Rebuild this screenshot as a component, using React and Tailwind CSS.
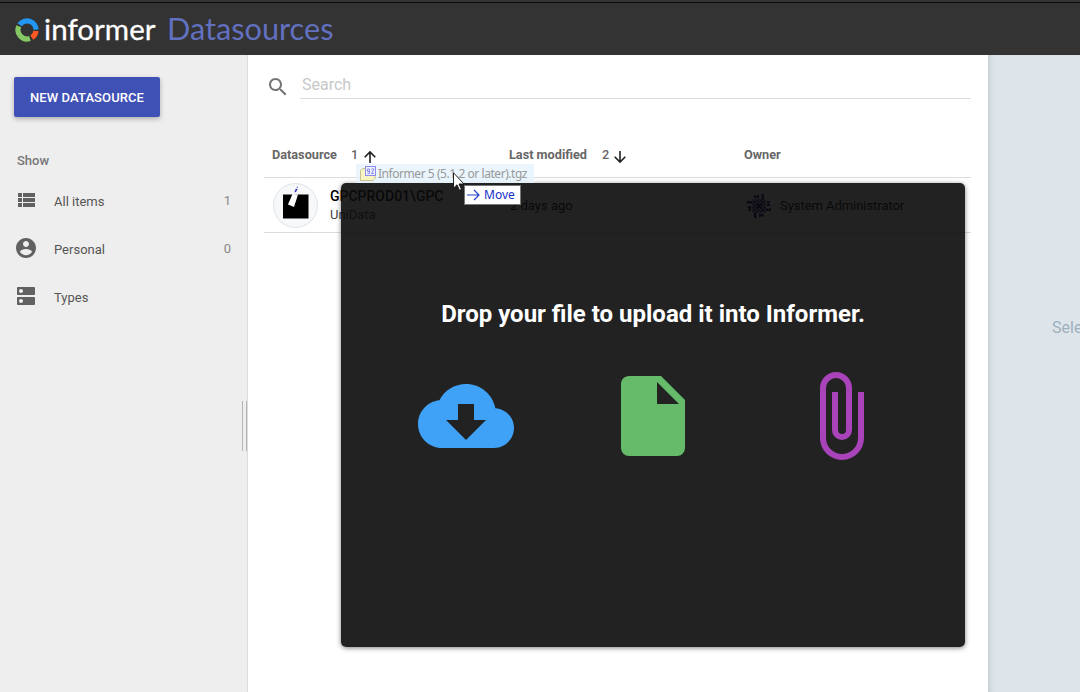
const FILE_ICON = "M13,9V3.5L18.5,9M6,2C4.89,2 4,2.89 4,4V20A2,2 0 0,0 6,22H18A2,2 0 0,0 20,20V8L14,2H6Z";
const CLOUD_ICON = "M19.35 10.04C18.67 6.59 15.64 4 12 4 9.11 4 6.6 5.64 5.35 8.04 2.34 8.36 0 10.91 0 14c0 3.31 2.69 6 6 6h13c2.76 0 5-2.24 5-5 0-2.64-2.05-4.78-4.65-4.96zM17 13l-5 5-5-5h3V9h4v4h3z";
const CLIP_ICON = "M16.5,6V17.5A4,4 0 0,1 12.5,21.5A4,4 0 0,1 8.5,17.5V5A2.5,2.5 0 0,1 11,2.5A2.5,2.5 0 0,1 13.5,5V15.5A1,1 0 0,1 12.5,16.5A1,1 0 0,1 11.5,15.5V6H10V15.5A2.5,2.5 0 0,0 12.5,18A2.5,2.5 0 0,0 15,15.5V5A4,4 0 0,0 11,1A4,4 0 0,0 7,5V17.5A5.5,5.5 0 0,0 12.5,23A5.5,5.5 0 0,0 18,17.5V6H16.5Z";
const LIST_ICON = "M4 14h4v-4H4v4zm0 5h4v-4H4v4zM4 9h4V5H4v4zm5 5h12v-4H9v4zm0 5h12v-4H9v4zM9 5v4h12V5H9z";
const PERSON_ICON = "M12 2C6.48 2 2 6.48 2 12s4.48 10 10 10 10-4.48 10-10S17.52 2 12 2zm0 3c1.66 0 3 1.34 3 3s-1.34 3-3 3-3-1.34-3-3 1.34-3 3-3zm0 14.2c-2.5 0-4.71-1.28-6-3.22.03-1.99 4-3.08 6-3.08 1.99 0 5.97 1.09 6 3.08-1.29 1.94-3.5 3.22-6 3.22z";
const DNS_ICON = "M20 13H4c-.55 0-1 .45-1 1v6c0 .55.45 1 1 1h16c.55 0 1-.45 1-1v-6c0-.55-.45-1-1-1zM7 19c-1.1 0-2-.9-2-2s.9-2 2-2 2 .9 2 2-.9 2-2 2zM20 3H4c-.55 0-1 .45-1 1v6c0 .55.45 1 1 1h16c.55 0 1-.45 1-1V4c0-.55-.45-1-1-1zM7 9c-1.1 0-2-.9-2-2s.9-2 2-2 2 .9 2 2-.9 2-2 2z";
const SEARCH_ICON = "M15.5 14h-.79l-.28-.27C15.41 12.59 16 11.11 16 9.5 16 5.91 13.09 3 9.5 3S3 5.91 3 9.5 5.91 16 9.5 16c1.61 0 3.09-.59 4.23-1.57l.27.28v.79l5 4.99L20.49 19l-4.99-5zm-6 0C7.01 14 5 11.99 5 9.5S7.01 5 9.5 5 14 7.01 14 9.5 11.99 14 9.5 14z";

function Icon({ d, className }) {
  return (
    <svg viewBox="0 0 24 24" fill="currentColor" className={className}>
      <path d={d} />
    </svg>
  );
}

function Logo() {
  return (
    <svg viewBox="0 0 24 24" className="mt-[2px] h-6 w-6 shrink-0" fill="none" strokeWidth="5.2">
      <path d="M4.600 6.800A9 9 0 0 1 21 11.600" stroke="#2196f3" />
      <path d="M20.960 12.900A9 9 0 0 1 16.800 19.600" stroke="#ff5722" />
      <path d="M14.900 20.500A9 9 0 0 1 3.800 8.300" stroke="#84c764" />
    </svg>
  );
}

function SortArrow({ down }) {
  return (
    <svg viewBox="0 0 14 14" className={down ? "ml-1 mt-[5px] h-3.5 w-3.5 rotate-180" : "ml-[5px] mt-[5px] h-3.5 w-3.5"} fill="none" stroke="#212121" strokeWidth="1.6">
      <path d="M7 13V2M1.700 7.200L7 1.900l5.300 5.300" />
    </svg>
  );
}

function NavItem({ icon, label, count }) {
  return (
    <div className="flex h-12 items-center pl-[14px] pr-4 text-[13px] text-[#555]">
      <Icon d={icon} className="mt-[-2px] h-6 w-6 text-[#616161]" />
      <span className="ml-4 mt-[2px] flex-1">{label}</span>
      <span className="text-[#888]">{count}</span>
    </div>
  );
}

function OwnerAvatar() {
  return (
    <svg viewBox="0 0 26 26" className="h-[26px] w-[26px]" fill="#12127c">
      <path d="M8 2l1.500 1L13 1.500v4L9.500 4.500 8 5.500zM15 1h3v5h-3l1-2.500zM24 8l-1 1.500 1.500 3.500h-4l1-3.500L20.500 8zM25 15v3h-5v-3l2.500 1zM18 24l-1.500-1-3.500 1.500v-4l3.500 1 1.500-1zM11 25H8v-5h3l-1 2.500zM2 18l1-1.500L1.500 13h4l-1 3.500 1 1.500zM1 11V8h5v3l-2.500-1z" />
      <rect x="6.500" y="6.500" width="13" height="13" />
      <path d="M9 7l2 2-2 2-2-2zM17 7l2 2-2 2-2-2zM9 15l2 2-2 2-2-2zM17 15l2 2-2 2-2-2zM13 7l1.500 2-1.500 2-1.500-2zM13 15l1.500 2-1.500 2-1.500-2zM9 11.500l2 1.500-2 1.500L7 13zM17 11.500l2 1.500-2 1.500-2-1.500z" fill="none" stroke="#fff" strokeWidth=".7" />
    </svg>
  );
}

export default function App() {
  return (
    <div className="relative flex h-[692px] w-[1080px] flex-col overflow-hidden bg-white font-['Roboto',sans-serif]">
      <header className="flex h-[55px] shrink-0 flex-col bg-[#333]">
        <div className="mt-0.5 h-px bg-[#0c0c0c]" />
        <div className="flex h-[52px] items-center pl-[15px] font-['Lato',sans-serif] leading-10">
          <Logo />
          <span className="ml-[5px] w-[123px] text-[29.5px] tracking-[0.05px] text-white [-webkit-text-stroke:0.3px_white]">informer</span>
          <span className="text-[30.7px] text-[#6270c0]">Datasources</span>
        </div>
      </header>
      <div className="flex min-h-0 flex-1">
        <aside className="flex w-[248px] shrink-0 border-r border-[#dcdcdc] bg-[#eee]">
          <div className="flex flex-1 flex-col">
            <button className="ml-[14px] mt-[22px] h-10 w-[146px] shrink-0 rounded-[2px] bg-[#3f51b5] pt-[2px] text-[13px] font-medium tracking-[0.1px] text-white shadow-[0_2px_5px_rgba(0,0,0,0.28)]">NEW DATASOURCE</button>
            <div className="ml-[17px] mt-[34px] h-5 text-[13px] font-medium leading-5 text-[#777]">Show</div>
            <nav className="mt-[6px]">
              <NavItem icon={LIST_ICON} label="All items" count="1" />
              <NavItem icon={PERSON_ICON} label="Personal" count="0" />
              <NavItem icon={DNS_ICON} label="Types" />
            </nav>
          </div>
          <div className="-ml-[5px] mt-[346px] h-[50px] w-[5px] border-x border-[#b5b5b5]" />
        </aside>
        <main className="flex w-[740px] shrink-0 flex-col pl-4 pr-[17px]">
          <div className="mt-[14px] flex h-[30px]">
            <Icon d={SEARCH_ICON} className="ml-[2px] mt-[6px] h-6 w-6 text-[#757575]" />
            <div className="ml-[10px] flex-1 border-b border-[#dcdcdc] pl-[2px] text-base leading-[31px] text-[#c8c8c8]">Search</div>
          </div>
          <div className="mt-[32px] flex h-[47px] border-b border-[#dcdcdc] pt-3.5 text-[12.7px] font-bold leading-5 text-[#666]">
            <div className="flex w-[237px] pl-2">
              <span className="w-[79px]">Datasource</span><span className="font-medium">1</span><SortArrow />
            </div>
            <div className="flex w-[235px] pl-2">
              <span className="w-[93px]">Last modified</span><span className="font-medium">2</span><SortArrow down />
            </div>
            <div className="pl-2">Owner</div>
          </div>
          <div className="flex h-[55px] items-center border-b border-[#dcdcdc] text-[13px] text-black">
            <div className="flex w-[237px] items-center pl-[9px]">
              <svg viewBox="0 0 45 45" className="h-[45px] w-[45px]">
                <circle cx="22.5" cy="22.5" r="22" fill="#f6f8fa" stroke="#dfe4e8" />
                <path d="M10 11.500h25.500v24H10z" fill="#000" />
                <path d="M19.500 11l5.500.5-4 12.500-6-2.500z" fill="#fff" />
                <path d="M21.800 9l1-3h1.500l-1.500 3zM24 5l.6-1.500z" fill="#2d2db5" stroke="#2d2db5" strokeWidth=".4" />
              </svg>
              <div className="ml-3 leading-[18px]">
                <div className="text-sm font-medium text-black">GPCPROD01\GPC</div>
                <div className="text-[#444]">UniData</div>
              </div>
            </div>
            <div className="w-[235px] pl-[9px] pt-[2px]">2 days ago</div>
            <div className="flex items-center gap-2 pl-[10px] pt-px"><OwnerAvatar /><span className="pt-px tracking-[-0.05px]">System Administrator</span></div>
          </div>
        </main>
        <section className="flex flex-1 overflow-hidden bg-[#dde5eb] shadow-[inset_5px_0_5px_-3px_rgba(0,30,20,0.12)]">
          <span className="ml-16 mt-[263px] whitespace-nowrap text-base leading-5 text-[#9eb0bc]">Select</span>
        </section>
      </div>

      <div className="absolute left-[341px] top-[183px] flex h-[464px] w-[624px] flex-col items-center rounded-[5px] bg-[#0a0a0a]/90 shadow-[0_1px_5px_rgba(0,0,0,0.5)]">
        <h1 className="mt-[115px] whitespace-nowrap text-2xl font-bold leading-8 text-white">Drop your file to upload it into Informer.</h1>
        <div className="mt-[38px] flex gap-[91px]">
          <Icon d={CLOUD_ICON} className="h-24 w-24 text-[#3fa2f6]" />
          <Icon d={FILE_ICON} className="h-24 w-24 text-[#66bb6a]" />
          <Icon d={CLIP_ICON} className="h-24 w-24 text-[#a843ba]" />
        </div>
      </div>

      <div className="absolute left-[356px] top-[164px] flex h-[19px] w-[178px] items-center bg-[#e5f3fd]/80 pl-1 font-['Noto_Sans',sans-serif] text-[12px] text-[#999]">
        <svg viewBox="0 0 16 16" className="h-4 w-4 shrink-0">
          <path d="M.5 4.500L3 2.500h12v10l-2 2H.5z" fill="#f8f4c4" stroke="#c9c48c" />
          <rect x="5.500" y=".5" width="10" height="9" fill="#eeeeff" stroke="#8c8cf0" />
          <path d="M9.500 3h-2v2.500h2V3v4.500h-2M11.500 3h2.500l-2.500 4.500H14" fill="none" stroke="#8c8cf0" />
        </svg>
        <span className="ml-[2px] whitespace-nowrap tracking-[-0.45px]">Informer 5 (5.1.2 or later).tgz</span>
      </div>
      <div className="absolute left-[464px] top-[185px] flex h-5 w-[57px] items-center border border-[#777] bg-white pl-0.5 font-['Noto_Sans',sans-serif] text-xs text-[#1430c8]">
        <svg viewBox="0 0 13 12" className="h-3 w-[13px]" fill="none" stroke="#2442cc" strokeWidth="1.2">
          <path d="M0 6h12M7 1l5 5-5 5" />
        </svg>
        <span className="ml-1">Move</span>
      </div>
      <svg viewBox="0 0 12 19" className="absolute left-[453px] top-[172px] h-[19px] w-3">
        <path d="M.5.8v15.400l3.500-3.400 2.500 5.500 2-.9-2.500-5.400h5z" fill="#fff" stroke="#111" strokeWidth=".9" />
      </svg>
    </div>
  );
}
